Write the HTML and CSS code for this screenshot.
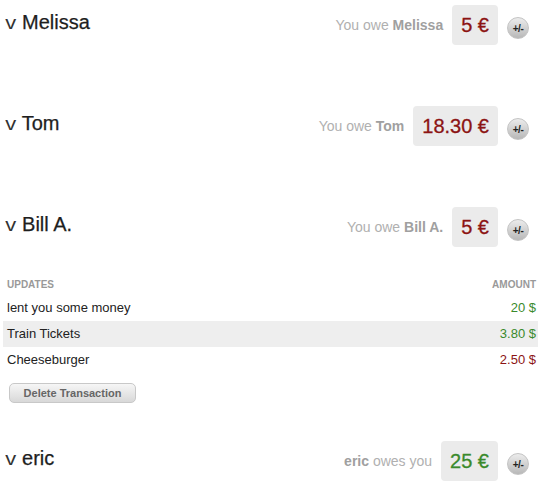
FILE: index.html
```html
<!DOCTYPE html>
<html>
<head>
<meta charset="utf-8">
<link rel="stylesheet" href="styles.css">
</head>
<body>
<div class="list">
  <div class="person">
    <div class="head">
      <div class="name"><span class="chev">v</span> Melissa</div>
      <div class="owe">You owe <b>Melissa</b></div>
      <div class="amount neg">5 €</div>
      <div class="adj">+/-</div>
    </div>
  </div>
  <div class="person">
    <div class="head">
      <div class="name"><span class="chev">v</span> Tom</div>
      <div class="owe">You owe <b>Tom</b></div>
      <div class="amount neg">18.30 €</div>
      <div class="adj">+/-</div>
    </div>
  </div>
  <div class="person open">
    <div class="head">
      <div class="name"><span class="chev">v</span> Bill A.</div>
      <div class="owe">You owe <b>Bill A.</b></div>
      <div class="amount neg">5 €</div>
      <div class="adj">+/-</div>
    </div>
    <div class="details">
      <div class="trow thead"><span>UPDATES</span><span>AMOUNT</span></div>
      <div class="trow"><span>lent you some money</span><span class="pos">20 $</span></div>
      <div class="trow alt"><span>Train Tickets</span><span class="pos">3.80 $</span></div>
      <div class="trow"><span>Cheeseburger</span><span class="neg">2.50 $</span></div>
      <div class="actions"><button class="del">Delete Transaction</button></div>
    </div>
  </div>
  <div class="person last">
    <div class="head">
      <div class="name"><span class="chev">v</span> eric</div>
      <div class="owe"><b>eric</b> owes you</div>
      <div class="amount pos">25 €</div>
      <div class="adj">+/-</div>
    </div>
  </div>
</div>
</body>
</html>
```
FILE: styles.css
```css
html, body {
  margin: 0;
  padding: 0;
  background: #ffffff;
}
body {
  font-family: "Liberation Sans", Arial, Helvetica, sans-serif;
  color: #222;
  width: 541px;
  height: 487px;
  overflow: hidden;
}
.list {
  padding-top: 5px;
}
.person {
  margin-bottom: 61px;
}
.person.open {
  margin-bottom: 38px;
}
.person.last {
  margin-bottom: 0;
}
.head {
  display: flex;
  align-items: center;
  height: 40px;
  padding: 0 12px 0 6px;
}
.name {
  flex: 1;
  font-size: 20px;
  color: #1e1e1e;
  margin-top: -6px;
  -webkit-text-stroke: 0.25px #1e1e1e;
}
.chev {
  font-size: 19px;
  font-weight: normal;
  color: #333;
  -webkit-text-stroke: 0;
  display: inline-block;
  transform: scaleX(1.15);
  margin-right: 1px;
}
.owe {
  font-size: 14px;
  color: #b0b0b0;
  margin-right: 9px;
}
.owe b {
  color: #a0a0a0;
}
.amount {
  height: 40px;
  line-height: 40px;
  padding: 0 9px;
  background: #ebebeb;
  border-radius: 4px;
  font-size: 20px;
  margin-right: 9px;
  -webkit-text-stroke: 0.3px currentColor;
}
.neg { color: #8c1414; }
.pos { color: #3a8a2c; }
.adj {
  width: 20px;
  height: 20px;
  border-radius: 50%;
  border: 1px solid #c4c4c4;
  background: linear-gradient(#ececec, #b8b8b8);
  font-size: 10px;
  font-weight: bold;
  color: #222;
  display: flex;
  align-items: center;
  justify-content: center;
  margin-top: 6px;
  letter-spacing: -0.5px;
}
.details {
  margin-top: 28px;
  padding: 0 3px;
}
.trow {
  display: flex;
  justify-content: space-between;
  height: 26px;
  line-height: 26px;
  font-size: 13px;
  padding: 0 2px 0 4px;
}
.trow.alt {
  background: #eeeeee;
}
.thead {
  font-size: 10px;
  font-weight: bold;
  color: #999;
  height: 20px;
  line-height: 20px;
}
.actions {
  padding: 10px 0 0 6px;
}
.del {
  font-family: "Liberation Sans", Arial, sans-serif;
  font-size: 11px;
  font-weight: bold;
  color: #666;
  width: 127px;
  height: 20px;
  padding: 0;
  border: 1px solid #c8c8c8;
  border-radius: 5px;
  background: linear-gradient(#f6f6f6, #d8d8d8);
}
```
